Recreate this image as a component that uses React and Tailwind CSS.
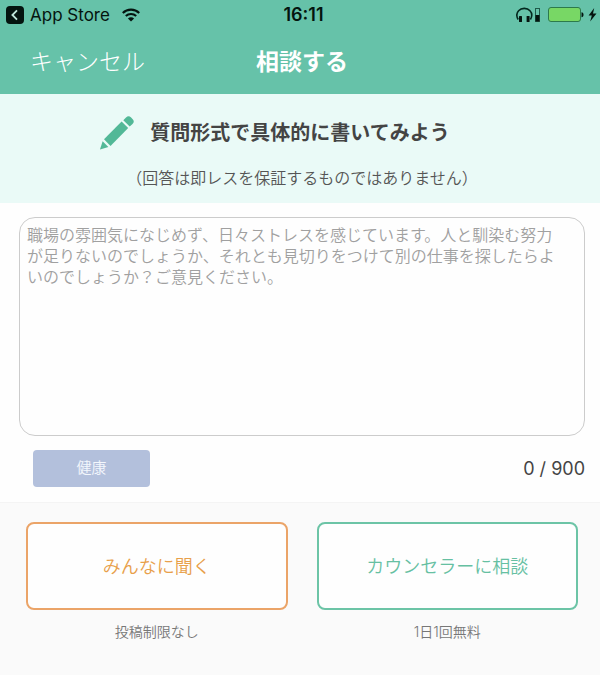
import React, { useState } from 'react';

const MAX_LENGTH = 900;

const PLACEHOLDER =
  '職場の雰囲気になじめず、日々ストレスを感じています。人と馴染む努力が足りないのでしょうか、それとも見切りをつけて別の仕事を探したらよいのでしょうか？ご意見ください。';

// Icons
const BackIcon = () => (
  <svg width="18" height="18" viewBox="0 0 18 18" aria-hidden="true">
    <rect width="18" height="18" rx="4" fill="#04140f" />
    <path d="M11 4.400 6.400 9l4.600 4.600" fill="none" stroke="#bfe6da" strokeWidth="1.800" />
  </svg>
);

const WifiIcon = () => (
  <svg width="18" height="14" viewBox="0 0 18 14" aria-hidden="true">
    <g fill="none" stroke="#04140f" strokeWidth="2.1">
      <path d="M.8 5a11.6 11.6 0 0 1 16.4 0" />
      <path d="M3.8 8.1a7.4 7.4 0 0 1 10.4 0" />
    </g>
    <path d="M9 13.6 5.9 10.5a4.4 4.4 0 0 1 6.2 0z" fill="#04140f" />
  </svg>
);

const HeadphonesIcon = () => (
  <svg width="25" height="16" viewBox="0 0 25 16" aria-hidden="true">
    <path d="M2.200 12.500C.4 9.500.6 6 2.600 3.800 5.400.5 11.200.5 14 3.800c2 2.200 2.200 5.700.4 8.700" fill="none" stroke="#04281e" strokeWidth="1.600" />
    <rect x="3" y="9" width="3" height="6" rx=".6" fill="#04140f" />
    <rect x="10.600" y="9" width="3" height="6" rx=".6" fill="#04140f" />
    <rect x="19.500" y="1.500" width="4" height="13" fill="none" stroke="#1f5a49" />
    <rect x="19.500" y="8" width="4" height="6.500" fill="#04140f" />
  </svg>
);

const BatteryIcon = () => (
  <svg width="50" height="16" viewBox="0 0 50 16" aria-hidden="true">
    <rect x="1.500" y=".5" width="32" height="14" rx="2.500" fill="#78d765" stroke="#2c7a4c" />
    <path d="M34.500 5.200c1.400.2 2 1.200 2 2.500s-.6 2.300-2 2.500z" fill="#04140f" />
    <path d="M47.200 1 41.600 8.600h3.200l-1.600 6 6.300-8h-3.500z" fill="#04140f" />
  </svg>
);

const PencilIcon = () => (
  <svg width="34" height="34" viewBox="0 0 34 34" fill="#52b897" aria-hidden="true">
    <path d="M0 33.500 2.600 25.200 8.400 31z" />
    <path d="M4 23.300 21.600 5.500l6.600 6.600L10.500 29.900z" />
    <path d="M23.300 4.200 26 1.500a3.600 3.600 0 0 1 5.100 0l1.400 1.400a3.600 3.600 0 0 1 0 5.100l-2.800 2.600z" />
  </svg>
);

const StatusBar = () => (
  <div className="grid h-[30px] grid-cols-3 items-center pr-[3px] pl-[6px] text-[17px] leading-5 text-[#04140f]">
    <div className="flex items-center gap-[6px]">
      <BackIcon />
      <span>App Store</span>
      <span className="ml-[6px]"><WifiIcon /></span>
    </div>
    <div className="pl-1 text-center text-[18px] font-semibold">16:11</div>
    <div className="flex items-center justify-end gap-[6px]">
      <HeadphonesIcon />
      <BatteryIcon />
    </div>
  </div>
);

const NavBar = () => (
  <div className="grid h-16 grid-cols-3 items-center pr-[26px] pl-[30px] text-[23px] leading-8 text-white">
    <button type="button" className="justify-self-start font-light">キャンセル</button>
    <h1 className="text-center font-bold">相談する</h1>
  </div>
);

export default function App() {
  const [text, setText] = useState('');

  return (
    <div className="min-h-screen bg-[#fafafa] font-['Inter','Noto_Sans_CJK_JP',sans-serif] text-[#444]">
      <header className="bg-[#66c2a9]">
        <StatusBar />
        <NavBar />
      </header>

      <section className="bg-[#eafaf7] pt-[22px] pb-[9px]">
        <div className="flex items-center justify-center gap-4 pr-[50px]">
          <PencilIcon />
          <h2 className="text-[20px] leading-[34px] font-bold">質問形式で具体的に書いてみよう</h2>
        </div>
        <p className="mt-3 pl-1 text-center text-[16px] leading-8 font-[350] text-[#555]">（回答は即レスを保証するものではありません）</p>
      </section>

      <section className="bg-[#fefefe] px-[15px] pt-[14px] pb-[15px] pl-[19px]">
        <textarea
          aria-label="相談内容"
          maxLength={MAX_LENGTH}
          value={text}
          onChange={(e) => setText(e.target.value)}
          placeholder={PLACEHOLDER}
          className="block h-[219px] w-full resize-none rounded-[16px] border border-[#ccc] bg-[#fefefe] py-[7px] pr-[18px] pl-[7px] text-[16px] leading-[21px] font-[350] outline-none placeholder:text-[#a0a0a0]"
        />
        <div className="mt-[14px] flex items-center justify-between pl-[14px]">
          <button type="button" className="h-[37px] w-[117px] rounded-[4px] bg-[#b3c0dc] text-[15px] font-[350] text-[#f4f7fc]">健康</button>
          <span className="text-[18px] leading-6">{text.length} / {MAX_LENGTH}</span>
        </div>
      </section>

      <section className="grid grid-cols-2 gap-[29px] border-t border-[#f4f4f4] pt-[19px] pr-[22px] pl-[26px]">
        <div className="text-center">
          <button type="button" className="h-[88px] w-full rounded-[8px] border-2 border-[#eba468] bg-[#fefefe] text-[18px] font-[350] text-[#e8a04a]">
            みんなに聞く
          </button>
          <p className="mt-3 text-[14px] leading-5 font-[350] text-[#777]">投稿制限なし</p>
        </div>
        <div className="text-center">
          <button type="button" className="h-[88px] w-full rounded-[8px] border-2 border-[#6cc4a6] bg-[#fefefe] text-[18px] font-[350] text-[#66c0a2]">
            カウンセラーに相談
          </button>
          <p className="mt-3 text-[14px] leading-5 font-[350] text-[#777]">1日1回無料</p>
        </div>
      </section>
    </div>
  );
}
